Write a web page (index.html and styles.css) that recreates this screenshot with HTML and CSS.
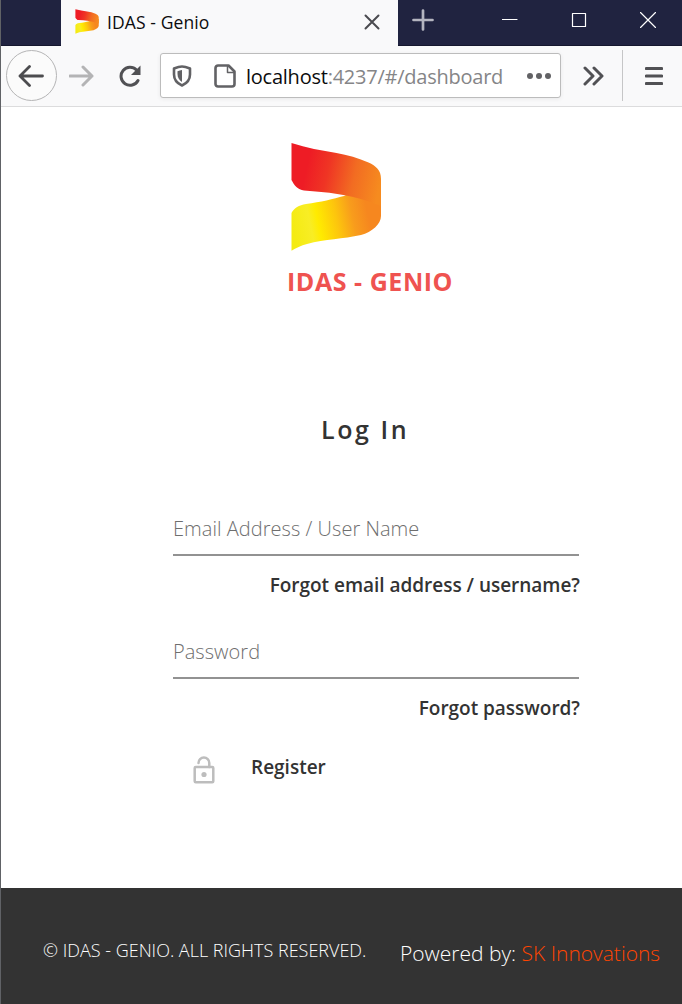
FILE: index.html
```html
<!DOCTYPE html>
<html lang="en">
<head>
<meta charset="utf-8">
<title>IDAS - Genio</title>
<link rel="stylesheet" href="styles.css">
</head>
<body>
<div class="window">
  <header class="titlebar">
    <div class="tab">
      <svg class="favicon" viewBox="0 0 92 110" preserveAspectRatio="none"><use href="#logo"/></svg>
      <span class="tab-title">IDAS - Genio</span>
      <svg class="tab-close" viewBox="0 0 16 16"><path d="M1.500 1.500l13 13M14.500 1.500l-13 13"/></svg>
    </div>
    <svg class="new-tab" viewBox="0 0 22 22"><path d="M11 1.500v19M1.500 11h19"/></svg>
    <div class="controls">
      <svg width="16" height="16" viewBox="0 0 16 16"><path d="M0 7.500h15"/></svg>
      <svg width="16" height="16" viewBox="0 0 16 16"><path d="M1.500 1.500h13v13h-13z"/></svg>
      <svg width="16" height="16" viewBox="0 0 16 16"><path d="M.5.5l15 15M15.500.5l-15 15"/></svg>
    </div>
  </header>
  <nav class="toolbar">
    <button class="back"><svg width="26" height="22" viewBox="0 0 26 22"><path d="M24.500 11H2M11.500 1.500L2 11l9.500 9.500"/></svg></button>
    <svg class="forward" width="25" height="22" viewBox="0 0 25 22"><path d="M1 11h22M14 2l9 9-9 9"/></svg>
    <svg class="reload" width="24" height="22" viewBox="0 0 24 22"><path class="arc" d="M20 15.500A9 9 0 1 1 18.500 5"/><path class="head" d="M22.500.500v9.500H13z"/></svg>
    <div class="urlbar">
      <svg class="shield" width="20" height="22" viewBox="0 0 20 22"><path class="line" d="M10 1.500C13 1.500 15.500 2.500 18 3.500v6c0 5-3.500 9-8 11-4.500-2-8-6-8-11v-6c2.500-1 5-2 8-2z"/><path class="fill" d="M10 5v12c-3-2-4.500-4.500-4.500-8V6.300C7 5.600 8.500 5 10 5z"/></svg>
      <svg class="page-icon" width="22" height="24" viewBox="0 0 22 24"><path class="line" d="M4 1.500h10.500l6 6V20a2.500 2.500 0 0 1-2.500 2.500H4A2.500 2.500 0 0 1 1.500 20V4A2.500 2.500 0 0 1 4 1.500z"/><path class="fold" d="M13.500 2v6.500H20"/></svg>
      <span class="url"><b>localhost</b>:4237/#/dashboard</span>
      <span class="dots"><i></i><i></i><i></i></span>
    </div>
    <svg class="more" width="21" height="20" viewBox="0 0 21 20"><path d="M2 2l8 8-8 8M11 2l8 8-8 8"/></svg>
    <span class="divider"></span>
    <svg class="menu" width="18" height="20" viewBox="0 0 18 20"><path d="M1.300 2.500h15.400M1.300 10h15.400M1.300 17.500h15.400"/></svg>
  </nav>
  <main class="page">
    <div class="brand">
      <svg class="logo" width="92" height="110" viewBox="0 0 92 110">
        <defs>
          <linearGradient id="red" x1="0" y1=".42" x2="1" y2=".58"><stop offset=".16" stop-color="#ee1c25"/><stop offset=".4" stop-color="#ef3524"/><stop offset=".7" stop-color="#f26c22"/><stop offset="1" stop-color="#f68b1f"/></linearGradient>
          <linearGradient id="yellow" x1="0" y1=".55" x2="1" y2=".4"><stop offset="0" stop-color="#f4eb12"/><stop offset=".2" stop-color="#f8ed25"/><stop offset=".29" stop-color="#ffeb00"/><stop offset=".5" stop-color="#fdc50d"/><stop offset=".68" stop-color="#f89c1c"/><stop offset=".85" stop-color="#f6871f"/></linearGradient>
        </defs>
        <g id="logo">
          <path fill="url(#yellow)" d="M1.500 108.700V71C4 66 9 63 16 62c15-2 27-5 38-8l20-10h17v30c0 8-9 16-20 19-18 4-36 4-54 9-6 1.500-11 4-15.500 6.700z"/>
          <path fill="url(#red)" d="M1.500 1c15 5 30 7.500 45 10 11 2 22 5 32 9.500C86 24 91 28 91 37v27L76 58.500C58 53 38 50 14 48.500 8 48 4 43 1.500 38z"/>
        </g>
      </svg>
      <h1 class="brand-name">IDAS - GENIO</h1>
    </div>
    <form class="login">
      <h2 class="login-title">Log In</h2>
      <div class="field"><span>Email Address / User Name</span></div>
      <a class="forgot">Forgot email address / username?</a>
      <div class="field second"><span>Password</span></div>
      <a class="forgot">Forgot password?</a>
      <div class="register">
        <svg width="22" height="28" viewBox="0 0 22 28"><rect x="1.700" y="11" width="18.600" height="15.200" rx="1"/><path d="M5.500 7A5.400 5.400 0 0 1 16.300 7v4"/><circle cx="11" cy="18.500" r="2.600"/></svg>
        <a>Register</a>
      </div>
    </form>
  </main>
  <footer class="footer">
    <span class="copyright">© IDAS - GENIO. ALL RIGHTS RESERVED.</span>
    <span class="powered">Powered by: <a>SK Innovations</a></span>
  </footer>
</div>
</body>
</html>
```
FILE: styles.css
```css
* { box-sizing: border-box; }
body { margin: 0; font-family: "Open Sans", sans-serif; background: #fff; }
svg { display: block; flex: none; fill: none; stroke-linecap: round; stroke-linejoin: round; }
h1, h2 { margin: 0; }
span, a { white-space: nowrap; }
.window { width: 682px; height: 1004px; display: flex; flex-direction: column; border-left: 1px solid #606266; overflow: hidden; }

.titlebar { height: 46px; flex: none; display: flex; background: #202340; border-bottom: 1px solid #15172e; padding-left: 60px; }
.tab { width: 337px; height: 46px; display: flex; flex: none; background: #f9f9fa; padding-left: 14px; }
.favicon { width: 24px; height: 25px; margin-top: 9px; }
.favicon path { stroke: none; }
.tab-title { width: 257px; margin-left: 8px; font-size: 17.5px; line-height: 30px; margin-top: 7px; color: #0c0c0d; letter-spacing: .1px; }
.tab-close { width: 16px; height: 16px; margin-top: 14px; stroke: #4a4a4f; stroke-width: 2; }
.new-tab { width: 22px; height: 22px; margin: 9px 0 0 14px; stroke: #b4b5c0; stroke-width: 2.7; }
.controls { display: flex; gap: 53px; margin: 12px 0 0 68px; stroke: #fff; stroke-width: 1.2; }

.toolbar { height: 61px; flex: none; display: flex; align-items: center; background: #f9f9fa; border-bottom: 1px solid #dcdcdd; padding: 0 0 1px 5px; stroke: #515154; stroke-width: 3; }
.back { width: 51px; height: 51px; flex: none; padding: 0 2px 0 0; border: 1px solid #b5b5b6; border-radius: 50%; background: #fbfbfb; display: flex; align-items: center; justify-content: center; stroke: #4c4c4f; stroke-width: 2.8; }
.forward { margin-left: 12px; stroke: #b4b4b5; }
.reload { margin-left: 24px; }
.reload .head { fill: #515154; stroke: none; }
.urlbar { width: 401px; height: 45px; margin-left: 18px; flex: none; display: flex; align-items: center; background: #fff; border: 1px solid #bcbcbc; border-radius: 3px; padding-left: 11px; box-shadow: 0 1px 4px rgba(0,0,0,.07); }
.line { stroke: #626265; stroke-width: 2.6; }
.fill { fill: #626265; stroke: none; }
.page-icon { margin-left: 22px; }
.fold { stroke: #626265; stroke-width: 1.5; }
.url { width: 281px; margin: 2px 0 0 10px; font-size: 20px; line-height: 30px; color: #858587; letter-spacing: -.24px; }
.url b { font-weight: 400; color: #0c0c0d; }
.dots { display: flex; gap: 3px; }
.dots i { width: 6px; height: 6px; border-radius: 50%; background: #626265; }
.more { margin-left: 22px; }
.divider { width: 1px; height: 51px; background: #c6c6c7; margin-left: 18px; }
.menu { margin-left: 22px; }

.page { flex: 1; display: flex; flex-direction: column; }
.brand { padding: 35px 0 0 286px; height: 200px; }
.logo { margin-left: 3px; }
.brand-name { margin-top: 9px; font-size: 25px; line-height: 40px; font-weight: 700; color: #ef5350; letter-spacing: .55px; white-space: nowrap; }
.login { width: 406px; margin-left: 172px; padding-top: 102px; display: flex; flex-direction: column; color: #333; }
.login-title { font-size: 25px; line-height: 40px; font-weight: 600; letter-spacing: 2.6px; padding-left: 148px; }
.field { height: 42px; margin-top: 65px; border-bottom: 2px solid #929292; font-size: 20px; line-height: 30px; font-weight: 300; color: #6e6e6e; letter-spacing: .04px; }
.field.second { margin-top: 38px; }
.forgot { align-self: flex-end; margin: 14px -1px 0 0; height: 29px; font-size: 19px; line-height: 30px; font-weight: 600; letter-spacing: -.02px; }
.register { display: flex; margin-top: 30px; padding-left: 20px; font-size: 19px; line-height: 30px; font-weight: 600; }
.register svg { margin-top: 4px; stroke: #bdbdbd; stroke-width: 2.5; }
.register circle { fill: #bdbdbd; stroke: none; }
.register a { margin-left: 36px; }

.footer { height: 116px; flex: none; display: flex; background: #333; color: #fff; font-weight: 300; line-height: 30px; }
.copyright { width: 399px; flex: none; margin-top: 47px; padding-left: 42px; font-size: 18px; }
.powered { margin-top: 50px; font-size: 21px; }
.powered a { color: #ff4500; }
```
